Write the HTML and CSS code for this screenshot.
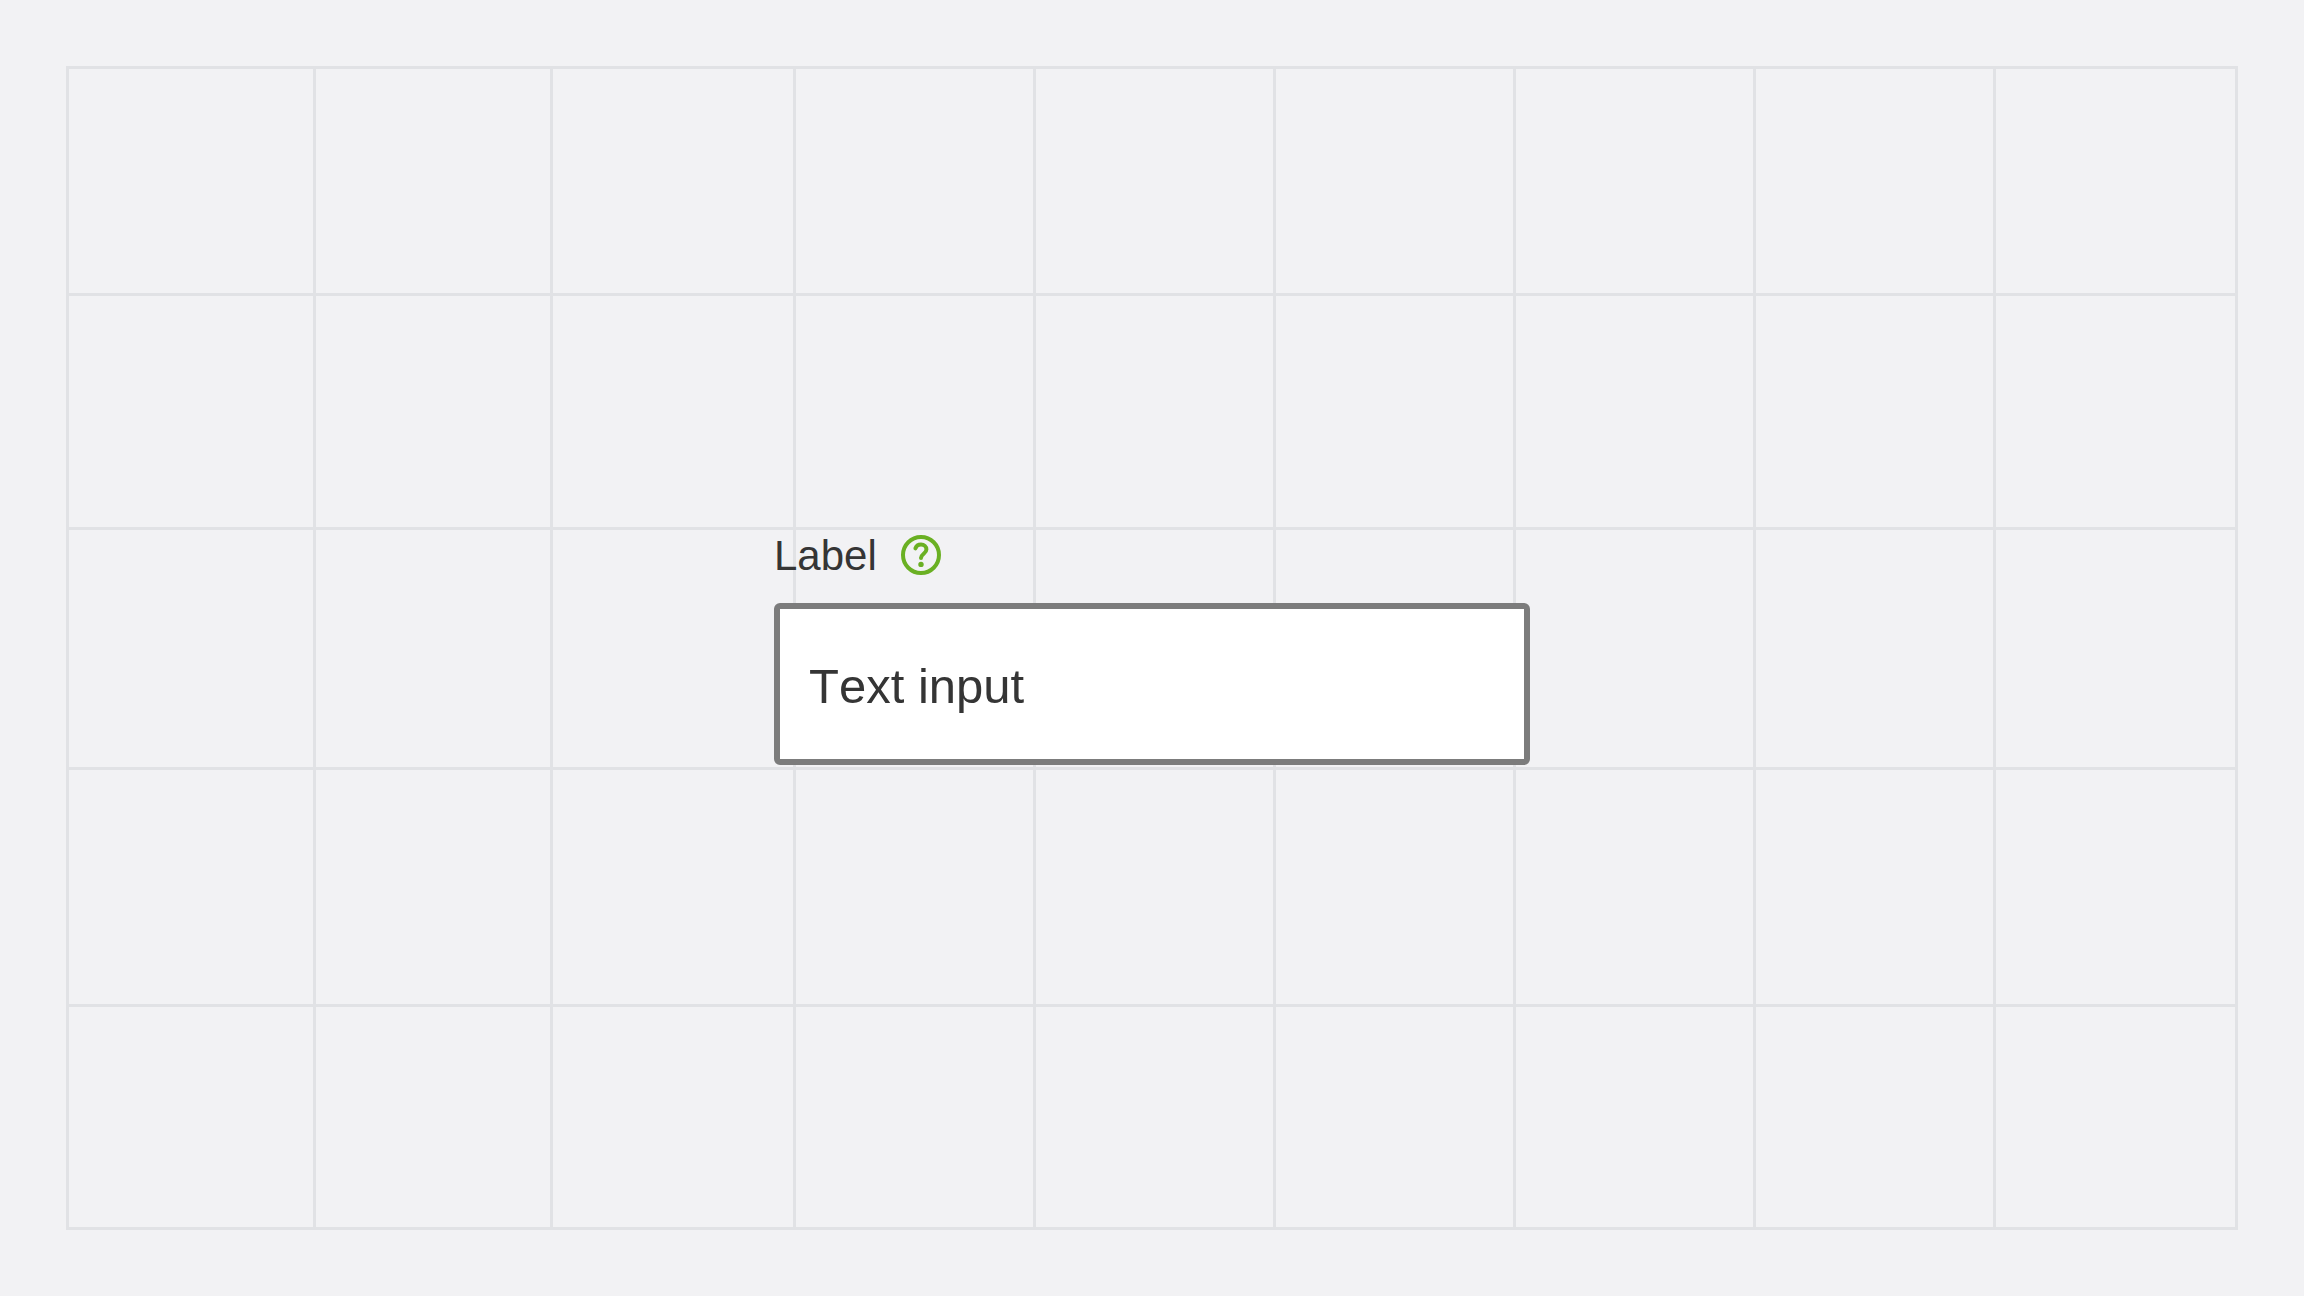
FILE: index.html
```html
<!DOCTYPE html>
<html lang="en">
<head>
<meta charset="utf-8">
<meta name="viewport" content="width=device-width, initial-scale=1">
<title>Text input</title>
<link rel="stylesheet" href="styles.css">
</head>
<body>
<main class="stage">
  <div class="grid" aria-hidden="true">
    <i></i><i></i><i></i><i></i><i></i><i></i><i></i><i></i><i></i>
    <i></i><i></i><i></i><i></i><i></i><i></i><i></i><i></i><i></i>
    <i></i><i></i><i></i><i></i><i></i><i></i><i></i><i></i><i></i>
    <i></i><i></i><i></i><i></i><i></i><i></i><i></i><i></i><i></i>
    <i></i><i></i><i></i><i></i><i></i><i></i><i></i><i></i><i></i>
  </div>
  <form class="field">
    <div class="field-header">
      <label class="field-label" for="text-input">Label</label>
      <button class="help" type="button" aria-label="Help">
        <svg class="help-icon" viewBox="0 0 24 24" fill="none" stroke="currentColor" stroke-width="2">
          <circle cx="12" cy="12" r="9"/>
          <path d="M9.2 8.7C9.6 7.5 10.6 6.8 12 6.8c1.6 0 2.7 1 2.7 2.4 0 2.1-2.7 2.2-2.7 4.3" stroke-linecap="round"/>
          <circle cx="12" cy="16.7" r="1.35" fill="currentColor" stroke="none"/>
        </svg>
      </button>
    </div>
    <input class="field-input" id="text-input" type="text" value="Text input">
  </form>
</main>
</body>
</html>
```
FILE: styles.css
```css
* {
  box-sizing: border-box;
}

body {
  margin: 0;
  background: #f2f2f4;
  color: #353535;
  font-family: "Liberation Sans", Helvetica, Arial, sans-serif;
  font-kerning: none;
}

.stage {
  display: grid;
  min-height: 100vh;
  padding: 66px;
}

.grid,
.field {
  grid-area: 1 / 1;
}

/* The gaps let the background through as the grid lines. */
.grid {
  display: grid;
  grid-template-columns: 244fr 234fr 240fr repeat(5, 237fr) 239fr;
  grid-template-rows: 224fr 231fr 237fr 234fr 220fr;
  gap: 3px;
  padding: 3px;
  background: #e1e2e5;
}

.grid i {
  background: #f2f2f4;
}

.field {
  display: flex;
  flex-direction: column;
  gap: 24px;
  place-self: center;
  width: 100%;
  max-width: 756px;
}

.field-header {
  display: flex;
  align-items: center;
  gap: 20px;
}

.field-label {
  padding-top: 2px;
  font-size: 42px;
  line-height: 46px;
}

.help {
  display: flex;
  padding: 0;
  border: 0;
  background: none;
  color: #6ab023;
  cursor: pointer;
}

.help-icon {
  width: 48px;
  height: 48px;
}

.field-input {
  width: 100%;
  padding: 50px 29px 46px;
  border: 6px solid #7c7c7c;
  border-radius: 6px;
  background: #fff;
  color: inherit;
  font-family: inherit;
  font-size: 49px;
  font-kerning: none;
  line-height: 54px;
}
```
